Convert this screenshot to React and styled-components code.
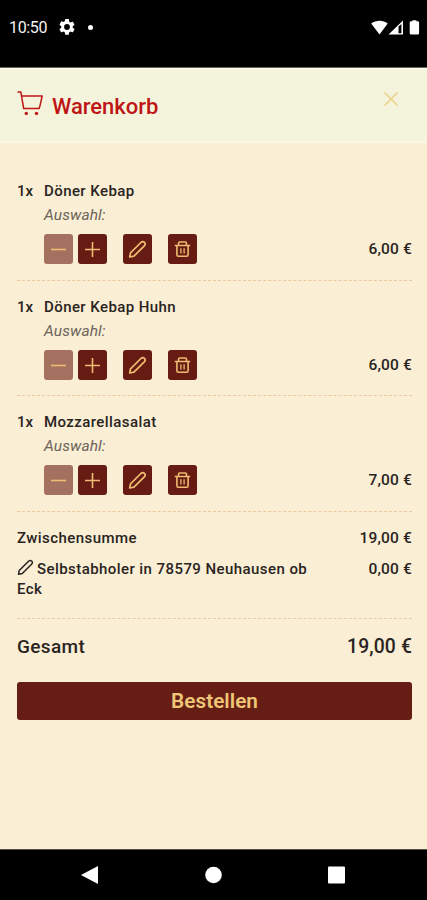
import React from "react";
import styled, { createGlobalStyle } from "styled-components";

const GlobalStyle = createGlobalStyle`
  * { box-sizing: border-box; }
  html, body { margin: 0; padding: 0; background: #faeed5; }
  body { font-family: Roboto, "Open Sans", sans-serif; color: #292421; }
  h1, p, ul { margin: 0; padding: 0; }
  button { font: inherit; border: 0; margin: 0; padding: 0; background: none; }
  svg { display: block; flex: none; }
`;

const Screen = styled.div`
  width: 427px;
  height: 900px;
  overflow: hidden;
  display: flex;
  flex-direction: column;
  background: #faeed5;
`;

const StatusBar = styled.div`
  flex: none;
  height: 68px;
  padding: 18px 7px 0 9px;
  display: flex;
  justify-content: space-between;
  align-items: flex-start;
  background: #000;
  border-bottom: 1px solid #66665c;
  color: #f2f2f2;
`;

const StatusGroup = styled.div`
  display: flex;
  align-items: center;
  height: 18px;
`;

const Clock = styled.span`
  width: 39px;
  font-size: 16px;
  line-height: 20px;
  letter-spacing: -0.35px;
  margin-right: 11px;
  padding-top: 2px;
  white-space: nowrap;
`;

const Dot = styled.span`
  width: 5px;
  height: 5px;
  border-radius: 50%;
  background: #fff;
  margin-left: 13px;
`;

const Header = styled.header`
  flex: none;
  height: 75px;
  padding: 0 28px 0 17px;
  display: flex;
  justify-content: space-between;
  background: #f4f4dc;
  border-top: 2px solid #fafae6;
  border-bottom: 2px solid #fbf6e8;
`;

const Title = styled.h1`
  display: flex;
  gap: 8px;
  padding-top: 21px;
  font-size: 22px;
  font-weight: 500;
  line-height: 32px;
  letter-spacing: -0.03px;
  color: #bf1515;
`;

const CloseButton = styled.button`
  height: 16px;
  margin-top: 21px;
  color: #ecd38c;
`;

const Cart = styled.main`
  flex: 1;
  padding: 22px 15px 0 17px;
  display: flex;
  flex-direction: column;
`;

const ItemList = styled.ul`
  list-style: none;
`;

const Item = styled.li`
  height: ${(p) => (p.$last ? "116px" : "115px")};
  padding-top: 16px;
  display: grid;
  grid-template-columns: 27px 1fr;
  grid-template-rows: 20px 33px 30px;
  border-bottom: 1px dashed #e9c8a2;
  font-size: 15px;
  font-weight: 500;
  line-height: 20px;

  &:first-child {
    height: 116px;
  }
`;

const ItemName = styled.span`
  letter-spacing: 0.42px;
`;

const Choice = styled.p`
  grid-column: 2;
  padding-top: 4px;
  font-size: 15.5px;
  font-weight: 400;
  font-style: italic;
  letter-spacing: 0.08px;
  color: #6c6459;
`;

const ItemFooter = styled.div`
  grid-column: 2;
  display: flex;
  justify-content: space-between;
  align-items: center;
`;

const Actions = styled.div`
  display: flex;
  gap: 16px;
`;

const Stepper = styled.div`
  display: flex;
  gap: 5px;
`;

const IconButton = styled.button`
  width: 29px;
  height: 30px;
  display: grid;
  place-items: center;
  border-radius: 3px;
  color: #eebc72;
  background: ${(p) => (p.disabled ? "#a4705f" : "#661c13")};
`;

const Price = styled.span`
  font-size: ${(p) => (p.$large ? "19.3px" : "15.5px")};
  letter-spacing: 0.15px;
  white-space: nowrap;
`;

const Summary = styled.section`
  height: 107px;
  padding-top: 16px;
  border-bottom: 1px dashed #e2ceae;
  display: flex;
  flex-direction: column;
  gap: 11px;
  font-size: 15px;
  font-weight: 500;
  line-height: 20px;
`;

const SummaryRow = styled.div`
  display: flex;
  justify-content: space-between;
  letter-spacing: 0.43px;
`;

const Delivery = styled.span`
  width: 300px;

  svg {
    display: inline-block;
    margin-right: 3px;
    vertical-align: -2px;
  }
`;

const Total = styled.div`
  display: flex;
  justify-content: space-between;
  padding-top: 16px;
  font-size: 19px;
  font-weight: 500;
  line-height: 24px;
  letter-spacing: 0.35px;
`;

const OrderButton = styled.button`
  height: 38px;
  margin-top: 23px;
  border-radius: 3px;
  background: #661d13;
  color: #efc578;
  font-size: 20.8px;
  font-weight: 600;
  line-height: 38px;
`;

const NavBar = styled.nav`
  flex: none;
  height: 51px;
  padding: 0 82px 0 81px;
  display: flex;
  align-items: center;
  justify-content: space-between;
  background: #000;
  border-top: 1px solid #55503f;
`;

const GearIcon = () => (
  <svg width="16" height="16" viewBox="2 2 20 20" fill="#fff">
    <path d="M19.14 12.94c.04-.3.06-.61.06-.94s-.02-.64-.07-.94l2.03-1.58a.49.49 0 0 0 .12-.61l-1.92-3.32a.49.49 0 0 0-.59-.22l-2.39.96a7 7 0 0 0-1.62-.94l-.36-2.54A.48.48 0 0 0 13.92 2h-3.84a.48.48 0 0 0-.47.41l-.36 2.54c-.59.24-1.13.57-1.62.94l-2.39-.96a.48.48 0 0 0-.59.22L2.74 8.87a.48.48 0 0 0 .12.61l2.03 1.58c-.05.3-.09.63-.09.94s.02.64.07.94l-2.03 1.58a.49.49 0 0 0-.12.61l1.92 3.32c.12.22.37.29.59.22l2.39-.96c.5.38 1.03.7 1.62.94l.36 2.54c.05.24.24.41.48.41h3.84c.24 0 .44-.17.47-.41l.36-2.54a6 6 0 0 0 1.62-.94l2.39.96c.22.08.47 0 .59-.22l1.92-3.32a.48.48 0 0 0-.12-.61zM12 15.6a3.6 3.6 0 1 1 0-7.2 3.6 3.6 0 0 1 0 7.2z" />
  </svg>
);

const SignalIcons = () => (
  <svg width="50" height="16" viewBox="0 0 50 16" fill="#fff">
    <path d="M1.2 4.5C6 .8 13 .8 17.7 4.5L9.5 15.5z" />
    <path fillRule="evenodd" d="M18.5 15.5 33 1.5V15.5zM28.5 7.6V14.2H31.4V5z" />
    <path d="M42.4 2.3V1.3h4v1h1.2q1.5 0 1.5 1.3V14.3q0 1.2-1.5 1.2h-6.5q-1.4 0-1.4-1.2V3.6q0-1.3 1.4-1.3z" />
  </svg>
);

const CartIcon = () => (
  <svg width="27" height="27" viewBox="0 0 27 27" fill="none" stroke="currentColor" strokeWidth="1.5" strokeLinejoin="round" strokeLinecap="round">
    <path d="M1 .9H3.8L6.7 17.5H22.2M4.4 5H25.2L22.7 15.8Q22.3 17.5 20.8 17.5" />
    <circle cx="9.3" cy="22.4" r="1.7" fill="currentColor" stroke="none" />
    <circle cx="19.5" cy="22.4" r="1.7" fill="currentColor" stroke="none" />
  </svg>
);

const CloseIcon = () => (
  <svg width="16" height="16" viewBox="0 0 16 16" fill="none" stroke="currentColor" strokeWidth="1.7">
    <path d="M1.5 1.5 14.5 14.5M14.5 1.5 1.5 14.5" />
  </svg>
);

const MinusIcon = () => (
  <svg width="17" height="18" viewBox="0 0 17 18" stroke="currentColor" strokeWidth="1.6">
    <path d="M1 9.5H16" />
  </svg>
);

const PlusIcon = () => (
  <svg width="17" height="18" viewBox="0 0 17 18" stroke="currentColor" strokeWidth="1.6">
    <path d="M1 9.5H16M8.5 2V17" />
  </svg>
);

const PencilIcon = ({ size = 19 }) => (
  <svg width={size} height={size} viewBox="0 0 19 19" fill="none" stroke="currentColor" strokeWidth="1.7" strokeLinejoin="round">
    <path d="M1.7 17 2.5 12.8 12.9 2.5Q14.8.8 16.4 2.3T16.3 5.9L5.9 16.2Z" />
  </svg>
);

const TrashIcon = () => (
  <svg width="17" height="18" viewBox="0 0 17 18" fill="none" stroke="currentColor" strokeWidth="1.6" strokeLinejoin="round">
    <path d="M.8 5.5H16.2M4.5 5.3V3.2Q4.5 2 5.7 2H11.3Q12.5 2 12.5 3.2V5.3M2.9 5.5V14.8Q2.9 16.2 4.3 16.2H12.7Q14.1 16.2 14.1 14.8V5.5" />
    <path strokeWidth="1.3" d="M6.9 8.2V13.6M10.1 8.2V13.6" />
  </svg>
);

const items = [
  { name: "Döner Kebap", price: "6,00 €" },
  { name: "Döner Kebap Huhn", price: "6,00 €" },
  { name: "Mozzarellasalat", price: "7,00 €" },
];

const CartItem = ({ name, price, last }) => (
  <Item $last={last}>
    <span>1x</span>
    <ItemName>{name}</ItemName>
    <Choice>Auswahl:</Choice>
    <ItemFooter>
      <Actions>
        <Stepper>
          <IconButton disabled aria-label="Weniger"><MinusIcon /></IconButton>
          <IconButton aria-label="Mehr"><PlusIcon /></IconButton>
        </Stepper>
        <IconButton aria-label="Bearbeiten"><PencilIcon /></IconButton>
        <IconButton aria-label="Entfernen"><TrashIcon /></IconButton>
      </Actions>
      <Price>{price}</Price>
    </ItemFooter>
  </Item>
);

export default function App() {
  return (
    <>
      <GlobalStyle />
      <Screen>
        <StatusBar>
          <StatusGroup>
            <Clock>10:50</Clock>
            <GearIcon />
            <Dot />
          </StatusGroup>
          <StatusGroup><SignalIcons /></StatusGroup>
        </StatusBar>
        <Header>
          <Title><CartIcon />Warenkorb</Title>
          <CloseButton aria-label="Schließen"><CloseIcon /></CloseButton>
        </Header>
        <Cart>
          <ItemList>
            {items.map((item, i) => (
              <CartItem key={item.name} last={i === items.length - 1} {...item} />
            ))}
          </ItemList>
          <Summary>
            <SummaryRow><span>Zwischensumme</span><Price>19,00 €</Price></SummaryRow>
            <SummaryRow>
              <Delivery><PencilIcon size={17} />Selbstabholer in 78579 Neuhausen ob Eck</Delivery>
              <Price>0,00 €</Price>
            </SummaryRow>
          </Summary>
          <Total><span>Gesamt</span><Price $large>19,00 €</Price></Total>
          <OrderButton>Bestellen</OrderButton>
        </Cart>
        <NavBar>
          <svg width="18" height="20" viewBox="0 0 18 20" fill="#fff"><path d="M0 10 17 1V19z" /></svg>
          <svg width="17" height="18" viewBox="0 0 17 18" fill="#fff"><circle cx="8.5" cy="9" r="8.3" /></svg>
          <svg width="17" height="18" viewBox="0 0 17 18" fill="#fff"><rect width="17" height="17" y=".5" rx="1" /></svg>
        </NavBar>
      </Screen>
    </>
  );
}
